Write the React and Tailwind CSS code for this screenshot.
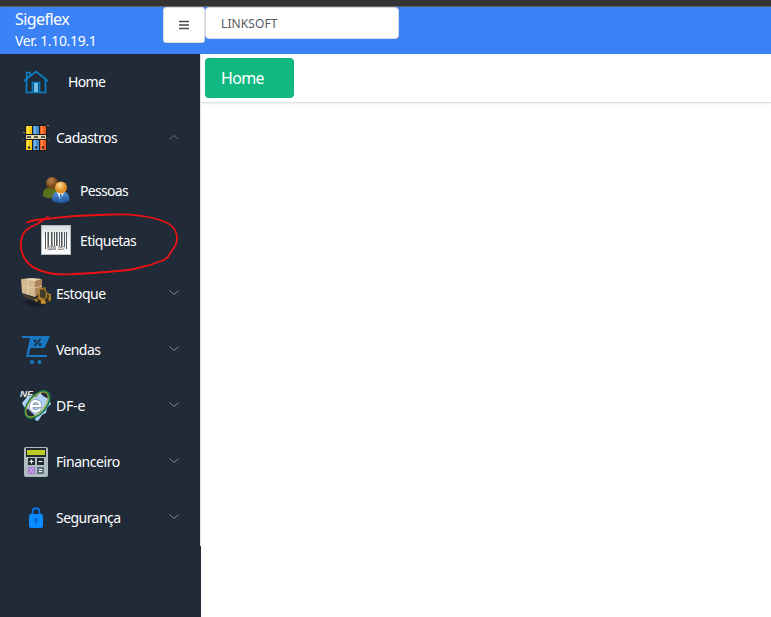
import React from 'react';

function HouseIcon() {
  return (
    <svg width="32" height="32" viewBox="0 0 32 32" fill="none" stroke="#0b80c4" strokeWidth="1.7">
      <path d="M4 15 16 5.5 28 15M6.5 13.5V26.5H25.5V13.5M6.700 12V6.500H10V9.500" />
      <path d="M12.500 26V16.500H19.500V26" />
      <path d="M14 17h4v9h-4z" fill="#72bfe9" stroke="none" />
    </svg>
  );
}

function BindersIcon() {
  return (
    <svg width="32" height="32" viewBox="0 0 32 32">
      <rect x="5" y="3" width="22" height="26" rx="1" fill="#171b22" />
      <path fill="#fbc707" d="M6 4h6v24H6z" />
      <path fill="#438fd2" d="M13 4h6v24h-6z" />
      <path fill="#f35b20" d="M20 4h6v24h-6z" />
      <path fill="#ffe14c" d="M7 4h2v24H7z" />
      <path fill="#70b4e8" d="M14 4h2v24h-2z" />
      <path fill="#ff8242" d="M21 4h2v24h-2z" />
      <path fill="#171b22" d="M5 12h22v1H5zM5 17h22v1H5z" />
      <path fill="#e5d5b0" d="M6 13h20v4H6z" />
      <path stroke="#34322d" strokeWidth="1.500" d="M7 15h4M14 15h4M21 15h4" />
      <g fill="#293039"><circle cx="9" cy="25.500" r="1.300" /><circle cx="16" cy="25.500" r="1.300" /><circle cx="23" cy="25.500" r="1.300" /></g>
      <path fill="#988531" d="M27 3h2v1h-2zM3 10h2v1H3z" />
      <path fill="#326b92" d="M28 18h1v1h-1z" /><path fill="#a0443b" d="M3 17h1v1H3z" />
    </svg>
  );
}

function PeopleIcon() {
  return (
    <svg width="32" height="32" viewBox="0 0 32 32">
      <defs>
        <radialGradient id="face" cx=".4" cy=".3"><stop stopColor="#ffdb91" /><stop offset="1" stopColor="#e08c22" /></radialGradient>
        <radialGradient id="brown" cx=".4" cy=".3"><stop stopColor="#bd8548" /><stop offset="1" stopColor="#784718" /></radialGradient>
        <linearGradient id="suit" x2="0" y2="1"><stop stopColor="#5f9ade" /><stop offset="1" stopColor="#1d4d95" /></linearGradient>
      </defs>
      <path d="M3 19c0-5 4-7 9-7s8 3 8 8c-2 4-15 4-17 1z" fill="#56701e" />
      <circle cx="12" cy="8" r="6" fill="url(#brown)" />
      <path d="M12 25c0-6 3-9 8.500-9s9 3 9 9c-2 4-15 4-17.500 0z" fill="url(#suit)" />
      <path d="m17 17 3.500 9 3.500-9z" fill="#eaf3ff" /><path d="m20 19 1.500 0 .7 7-1.200 1-1.500-1z" fill="#3474c2" />
      <circle cx="21" cy="12.500" r="6" fill="url(#face)" />
    </svg>
  );
}

function BarcodeIcon() {
  return (
    <svg width="32" height="32" viewBox="0 0 32 32">
      <defs><linearGradient id="paper" x2="0" y2="1"><stop stopColor="#dadddf" /><stop offset=".5" stopColor="#fafafa" /></linearGradient></defs>
      <path fill="#b6babd" d="M1 0h30v30H1z" /><path fill="url(#paper)" d="M2 1h28v28H2z" />
      <path stroke="#55585a" d="M5.500 7v17M8.500 7v14M11.500 7v14M14.500 7v14M16.500 7v14M19.500 7v14M21.500 7v14M24.500 7v14M26.500 7v17" />
      <path stroke="#9b9ea0" d="M7.500 7v14M12.500 7v14M17.500 7v14M22.500 7v14" />
      <g className="font-['Liberation_Sans',sans-serif]" fontSize="4.500" fill="#333"><text x="7" y="24.500" textLength="9">6009</text><text x="18" y="24.500" textLength="7">057</text></g>
    </svg>
  );
}

function StockIcon() {
  return (
    <svg width="34" height="34" viewBox="0 0 34 34">
      <path d="M3 26 16 19 25 26 17 31z" fill="#171a22" opacity=".7" />
      <path d="m1 2 11-1 10 1-7 3z" fill="#ead5b4" />
      <path d="m1 2 14 2v16L2 16z" fill="#d3b78f" /><path d="m15 4 7-2v13l-7 5z" fill="#ad8258" />
      <path d="M2 9l13 2 7-2M8 3v15" stroke="#e9d4b3" fill="none" strokeWidth=".8" />
      <path d="m3 17 12 4 5-3v3l-5 3-12-4z" fill="#4b3e2f" />
      <path d="m18 22 1-10 6-2 2 6 4 1v6l-6 4-7-2z" fill="#a97c24" />
      <path d="M20 13v7l5 2 1-6-2-4zM27 17v5l2-1v-3z" fill="#443b29" />
      <path d="m15 22 7 2 8-3v3l-8 3-7-3z" fill="#c99630" />
      <ellipse cx="19" cy="25" rx="2" ry="2.500" fill="#292621" /><ellipse cx="27" cy="23.500" rx="2" ry="2.500" fill="#332d22" />
    </svg>
  );
}

function CartIcon() {
  return (
    <svg width="32" height="32" viewBox="0 0 32 32">
      <path fill="#1878c3" d="M2 2h28l-5.500 12H10.500L8.500 21H27v2H6L10 4H2z" />
      <path stroke="#19283a" strokeWidth="1.700" d="m14.500 12 6-7" /><circle cx="15" cy="7" r="1.400" fill="#19283a" /><circle cx="20" cy="10.500" r="1.400" fill="#19283a" />
      <circle cx="12" cy="28" r="2" fill="#1878c3" /><circle cx="19.500" cy="28" r="2" fill="#1878c3" />
    </svg>
  );
}

function InvoiceIcon() {
  return (
    <svg width="34" height="34" viewBox="0 0 34 34" className="overflow-visible">
      <path d="m7 8 5-2 4 2 4-5 3 4 6 3 2 5-4 4-1 5-4 2-4 6-3-1 1-4-4-3-4-4-4-2-2-4z" fill="#b0d0f8" />
      <ellipse cx="17.500" cy="15.500" rx="9" ry="16" transform="rotate(40 17.500 15.500)" fill="none" stroke="#11794b" strokeWidth="1.800" />
      <ellipse cx="17" cy="15.500" rx="7.500" ry="15" transform="rotate(40 17 15.500)" fill="none" stroke="#b7b638" />
      <path d="M11 17h9c1-6-9-7-9 0 0 6 6 7 9 3" fill="none" stroke="#728ba5" strokeWidth="3.800" />
      <path d="M11 17h9c1-6-9-7-9 0 0 6 6 7 9 3" fill="none" stroke="#fff" strokeWidth="2.500" />
      <text x="0" y="8" fontSize="9.500" fontWeight="bold" fontStyle="italic" fill="#e3e6e9" textLength="13" lengthAdjust="spacingAndGlyphs" className="font-['Liberation_Sans',sans-serif]">NF</text>
    </svg>
  );
}

function CalculatorIcon() {
  return (
    <svg width="32" height="32" viewBox="0 0 32 32">
      <rect x="4" y="1" width="24" height="30" rx="2" fill="#b0bbc0" /><path fill="#252b2e" d="M6 2h20v9H6z" /><path fill="#c0ca27" d="M7 4h18v5H7z" />
      <path fill="#222b32" d="M8 12h7v7H8zM17 12h7v7h-7z" /><path fill="#a777d2" d="M8 21h7v7H8z" /><path fill="#5b727f" d="M17 21h7v7h-7z" />
      <path stroke="#fff" strokeWidth="1.200" d="M9.500 15.500h4M11.500 13.500v4M18.500 15.500h4M19 25.500h3M19 23.500h3" />
      <path stroke="#f0dcff" strokeWidth=".8" d="m9.500 27 4-5M9 23h2M12 26h2" />
    </svg>
  );
}

function LockIcon() {
  return (
    <svg width="32" height="32" viewBox="0 0 32 32">
      <path d="M12.500 14v-4c0-5 7-5 7 0v4" fill="none" stroke="#0878ef" strokeWidth="1.800" /><rect x="9" y="12" width="14" height="14" rx="2" fill="#078bff" />
      <circle cx="16" cy="18" r="1.900" fill="#0668d0" /><path d="M15.300 18h1.400v4h-1.400z" fill="#0668d0" />
    </svg>
  );
}

function Chevron({ up }) {
  return (
    <svg width="12" height="8" viewBox="0 0 12 8" className={`mb-0.5 ${up ? 'rotate-180' : ''}`} fill="none" stroke={up ? '#60727f' : '#858480'}>
      <path d="m1.500 1.500 4.500 4 4.500-4" />
    </svg>
  );
}

function MenuRow({ icon, text, up, tracking = 'tracking-[-0.5px]' }) {
  return (
    <div className="flex h-14 items-center pl-5">
      <div className="flex w-9 shrink-0">{icon}</div>
      <span className={tracking}>{text}</span>
      <div className="ml-auto mr-5"><Chevron up={up} /></div>
    </div>
  );
}

export default function App() {
  return (
    <div className="flex h-[617px] w-[771px] flex-col overflow-hidden bg-white font-['Noto_Sans','Open_Sans',sans-serif] text-[14px] leading-5">
      <div className="h-[7px] shrink-0 border-b border-[#646464] bg-[#333333]" />
      <header className="flex h-[47px] shrink-0 bg-[#3b82f6] text-white">
        <div className="w-[163px] pl-[15px]">
          <div className="h-6 text-base leading-6 tracking-[-0.55px]">Sigeflex</div>
          <div className="leading-5 tracking-[-0.35px]">Ver. 1.10.19.1</div>
        </div>
        <button aria-label="Menu" className="flex h-9 w-[42px] items-center justify-center rounded-[3px] border border-[#dadde4] bg-white">
          <svg width="10" height="10" stroke="#4b4b4b" strokeWidth="1.400"><path d="M0 1.500h10M0 5h10M0 8.500h10" /></svg>
        </button>
        <div className="flex h-8 w-[194px] items-center rounded border border-[#d4d8e0] bg-white pl-[15px] pt-px text-[12px] tracking-[0.1px] text-[#555b64]">LINKSOFT</div>
      </header>
      <div className="flex min-h-0 flex-1">
        <aside className="relative w-[201px] shrink-0 bg-[#212a37] text-white">
          <nav className="h-[492px] border-r border-[#dfe2e6]">
            <div className="flex h-14 items-center pl-5"><div className="w-12"><HouseIcon /></div><span className="tracking-[-0.65px]">Home</span></div>
            <MenuRow icon={<BindersIcon />} text="Cadastros" up />
            <div className="flex h-[50px] items-center pl-10"><div className="w-10"><PeopleIcon /></div><span className="tracking-[-0.7px]">Pessoas</span></div>
            <div className="flex h-[50px] items-center pl-10"><div className="w-10"><BarcodeIcon /></div><span className="tracking-[-0.55px]">Etiquetas</span></div>
            <MenuRow icon={<StockIcon />} text="Estoque" />
            <MenuRow icon={<CartIcon />} text="Vendas" tracking="tracking-[-0.6px]" />
            <MenuRow icon={<InvoiceIcon />} text="DF-e" tracking="tracking-[-0.2px]" />
            <MenuRow icon={<CalculatorIcon />} text="Financeiro" tracking="tracking-[-0.45px]" />
            <MenuRow icon={<LockIcon />} text="Segurança" tracking="tracking-[-0.55px]" />
          </nav>
          <svg className="pointer-events-none absolute left-0 top-[150px]" width="201" height="80" fill="none" stroke="#ec1115" strokeWidth="1.800" strokeLinecap="round" strokeLinejoin="round">
            <path d="M27 18.500C33 16 39 15.500 46 15C68 12 90 11 111 10.500C130 10 145 11 160 16C172 20 176 25 177 33C177 37 177 39 175 42L171 48 168 53 164 56C152 61 144 63 134 65C116 68 95 69 74 70C64 70.500 58 71 49 69C40 67 34 65 29 60C23 55 20 45 21 38C22 31 23 28 29 24L37 20 48 13" />
          </svg>
        </aside>
        <main className="min-w-0 flex-1">
          <div className="h-[49px] border-b border-[#e1e1e1] p-1 shadow-[0_1px_2px_rgba(0,0,0,0.08)]">
            <div className="flex h-10 w-[89px] items-center rounded bg-[#11b981] pl-4 text-base tracking-[-0.65px] text-white">Home</div>
          </div>
        </main>
      </div>
    </div>
  );
}
